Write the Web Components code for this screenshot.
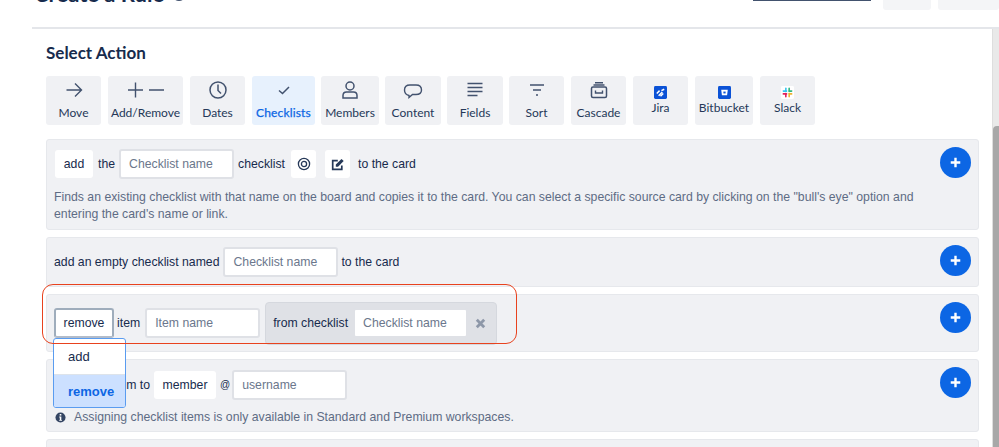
<!DOCTYPE html>
<html><head><meta charset="utf-8"><title>Create a Rule</title>
<style>
html,body{margin:0;padding:0;background:#fff;overflow:hidden;height:447px}
body{font-family:"Liberation Sans",sans-serif;color:#172b4d}
</style></head><body>
<rule-page>
  <rule-header slot="header"></rule-header>
  <section-title>Select Action</section-title>
  <tab-bar>
    <action-tab label="Move" w="55"><svg viewBox="0 0 20 20" width="20" height="20"><path d="M2.5 10H17.5M11 3.5L17.5 10L11 16.5" fill="none" stroke="#42526e" stroke-width="1.4"/></svg></action-tab>
    <action-tab label="Add/Remove" w="75"><svg viewBox="0 0 38 20" width="38" height="20"><path d="M1 10H16M8.5 2.5V17.5M22 10H37" fill="none" stroke="#42526e" stroke-width="1.4"/></svg></action-tab>
    <action-tab label="Dates" w="55"><svg viewBox="0 0 20 20" width="20" height="20"><circle cx="10" cy="10" r="8" fill="none" stroke="#42526e" stroke-width="1.5"/><path d="M10 4.5V10.5L13 13.5" fill="none" stroke="#42526e" stroke-width="1.5"/></svg></action-tab>
    <action-tab label="Checklists" w="63" active><svg viewBox="0 0 20 20" width="20" height="20"><path d="M5 10.5L8.5 13.5L15 7" fill="none" stroke="#42526e" stroke-width="1.5"/></svg></action-tab>
    <action-tab label="Members" w="58"><svg viewBox="0 0 20 20" width="20" height="20"><circle cx="10" cy="6" r="4" fill="none" stroke="#42526e" stroke-width="1.5"/><path d="M3 18V15.5Q3 12 6.5 12H13.5Q17 12 17 15.5V18Z" fill="none" stroke="#42526e" stroke-width="1.5"/></svg></action-tab>
    <action-tab label="Content" w="56"><svg viewBox="0 0 20 20" width="20" height="20"><path d="M6 15.5Q1.5 14.5 1.5 10Q1.5 5 7 5H13Q18.5 5 18.5 10Q18.5 14.5 13 14.5H9.5L6 17.5Z" fill="none" stroke="#42526e" stroke-width="1.4"/></svg></action-tab>
    <action-tab label="Fields" w="56"><svg viewBox="0 0 20 20" width="20" height="20"><path d="M2.5 3.5H17.5M2.5 7.5H17.5M2.5 11.5H17.5M2.5 15.5H12.5" fill="none" stroke="#42526e" stroke-width="1.5"/></svg></action-tab>
    <action-tab label="Sort" w="55"><svg viewBox="0 0 20 20" width="20" height="20"><path d="M3 5H17M6 10H14M9 15H11" fill="none" stroke="#42526e" stroke-width="1.5"/></svg></action-tab>
    <action-tab label="Cascade" w="55"><svg viewBox="0 0 20 20" width="20" height="20"><rect x="2.5" y="7" width="15" height="10.5" rx="1.5" fill="none" stroke="#42526e" stroke-width="1.5"/><path d="M6.5 10.5V13H13.5V10.5M4.5 5H15.5M6 2.8H14" fill="none" stroke="#42526e" stroke-width="1.4"/></svg></action-tab>
    <action-tab label="Jira" w="55" app><svg viewBox="0 0 14 14" width="13" height="13"><rect width="14" height="14" rx="1.5" fill="#0b52d6"/><path d="M3 8L6 5M5 10.5L9 6.5M8 5L11 3.5M7 11L10 8" stroke="#fff" stroke-width="1.6" fill="none"/></svg></action-tab>
    <action-tab label="Bitbucket" w="58" app><svg viewBox="0 0 14 14" width="13" height="13"><rect width="14" height="14" rx="1.5" fill="#0b52d6"/><path d="M3.5 4H10.5L9.8 10H4.2Z" fill="#fff"/><rect x="5.8" y="6" width="2.4" height="2" fill="#0b52d6"/></svg></action-tab>
    <action-tab label="Slack" w="55" app><svg viewBox="0 0 14 14" width="13" height="13"><rect width="14" height="14" rx="1.5" fill="#fff"/><path d="M5.2 2.5V6" stroke="#36c5f0" stroke-width="1.7" stroke-linecap="round"/><path d="M2.5 5.5H6" stroke="#36c5f0" stroke-width="1.7" stroke-linecap="round"/><path d="M8.8 2.5V6M8.5 5.5H11.5" stroke="#2eb67d" stroke-width="1.7" stroke-linecap="round"/><path d="M8.8 8V11.5M8.5 8.5H11.5" stroke="#ecb22e" stroke-width="1.7" stroke-linecap="round"/><path d="M5.2 8V11.5M2.5 8.5H6" stroke="#e01e5a" stroke-width="1.7" stroke-linecap="round"/></svg></action-tab>
  </tab-bar>
  <rule-list>
    <rule-row h="91">
      <rule-line>
        <value-chip w="38" style="margin-left:1px">add</value-chip><span style="margin-left:5px">the</span><text-field w="115" style="margin-left:4px">Checklist name</text-field><span style="margin-left:4px">checklist</span>
        <value-chip w="25" style="margin-left:6px"><svg viewBox="0 0 14 14" width="14" height="14"><circle cx="7" cy="7" r="5.6" fill="none" stroke="#253858" stroke-width="1.3"/><circle cx="7" cy="7" r="2.6" fill="none" stroke="#253858" stroke-width="1.3"/></svg></value-chip>
        <value-chip w="25" style="margin-left:9px"><svg viewBox="0 0 14 14" width="14" height="14"><path d="M10.8 8.5V12.3H1.7V3.6H6.8" fill="none" stroke="#253858" stroke-width="1.7"/><path d="M4.8 7.6L10.5 1.9L12.7 4.1L7 9.8H4.8Z" fill="#253858"/></svg></value-chip>
        <span style="margin-left:8px">to the card</span>
      </rule-line>
      <rule-note>Finds an existing checklist with that name on the board and copies it to the card. You can select a specific source card by clicking on the "bull's eye" option and entering the card's name or link.</rule-note>
    </rule-row>
    <rule-row h="50">
      <rule-line>
        <span>add an empty checklist named</span><text-field w="115" style="margin-left:4px">Checklist name</text-field><span style="margin-left:3px">to the card</span>
      </rule-line>
    </rule-row>
    <rule-row h="58" first="12">
      <rule-line>
        <value-chip w="60" open>remove</value-chip><span style="margin-left:3px">item</span><text-field w="115" style="margin-left:5px">Item name</text-field>
        <optional-group style="margin-left:5px"><span>from checklist</span><text-field w="115" style="margin-left:5px">Checklist name</text-field><remove-x></remove-x></optional-group>
      </rule-line>
    </rule-row>
    <rule-row h="73" first="9">
      <rule-line>
        <span>assign the item to</span><value-chip w="62" style="margin-left:4px">member</value-chip><span style="margin-left:4px;font-size:10px">@</span><text-field w="115" style="margin-left:2px">username</text-field>
      </rule-line>
      <rule-note info><svg viewBox="0 0 12 12" width="11" height="11" style="margin:0 8px 0 1px;flex:none"><circle cx="6" cy="6" r="5.5" fill="#344563"/><rect x="5.1" y="2.2" width="1.8" height="1.7" fill="#fff"/><path d="M4.6 5H6.9V8.6H7.6V9.6H4.6V8.6H5.2V6H4.6Z" fill="#fff"/></svg>Assigning checklist items is only available in Standard and Premium workspaces.</rule-note>
    </rule-row>
    <rule-row h="40"></rule-row>
  </rule-list>
  <select-menu></select-menu>
  <red-outline></red-outline>
  <page-scrollbar></page-scrollbar>
</rule-page>
<script>
function def(name,css,html,init){
  customElements.define(name,class extends HTMLElement{
    connectedCallback(){
      if(this.shadowRoot)return;
      const r=this.attachShadow({mode:"open"});
      r.innerHTML="<style>"+css+"</style>"+(typeof html==="function"?html(this):html);
      if(init)init(this,r);
    }
  });
}
def("rule-page",`:host{display:block;position:relative;width:999px;height:447px;overflow:hidden}
.main{padding:0 0 0 46px}`,`<slot name="header"></slot><div class="main"><slot></slot></div>`);
def("rule-header",`:host{display:block;margin-left:32px;height:27px;border-bottom:2px solid #e4e6ea;width:967px}
.row{display:flex;align-items:flex-start;height:27px}
h1{margin:-18px 0 0 2px;font:700 22px/24px Lato,sans-serif;color:#172b4d;display:flex;align-items:center;gap:8px;white-space:nowrap;flex:none}
i{display:block;width:14px;height:14px;border-radius:50%;background:#42526e}
.link{width:118px;height:1px;background:#42526e;flex:none}
.b{height:10px;background:#f4f5f7;border-radius:0 0 3px 3px;flex:none}`,
`<div class="row"><h1>Create a Rule<i></i></h1><div class="link" id="l"></div><div class="b" style="margin-left:12px;width:48px"></div><div class="b" style="margin-left:7px;width:61px"></div></div>`,
(el,r)=>{const h=r.querySelector("h1"),l=r.querySelector("#l");l.style.marginLeft=(721-h.offsetWidth-2)+"px";});
def("section-title",`:host{display:block;font:700 17px/20px Lato,sans-serif;color:#172b4d;padding-top:14px;height:33px}`,`<slot></slot>`);
def("tab-bar",`:host{display:flex;gap:7px;height:49px}
::slotted(action-tab:nth-child(4)){margin-right:-1px}::slotted(action-tab:nth-child(5)){margin-right:-1px}::slotted(action-tab:nth-child(6)){margin-right:-1px}::slotted(action-tab:nth-child(7)){margin-right:-1px}`,`<slot></slot>`);
def("action-tab",`:host{display:flex;flex-direction:column;align-items:center;box-sizing:border-box;height:49px;border-radius:3px;background:#f0f1f4;color:#253858;font:400 12px/16px Lato,sans-serif;padding-top:4px;white-space:nowrap;flex:none}
:host([active]){background:#e7f1fd;color:#0c66e4;-webkit-text-stroke:.25px #0c66e4;letter-spacing:.15px}
.i{height:20px;display:flex;align-items:center;justify-content:center}
.t{margin-top:5px}
:host([app]){padding-top:10px}
:host([app]) .i{height:13px}
:host([app]) .t{margin-top:1px}`,
el=>`<div class="i"><slot></slot></div><div class="t">${el.getAttribute("label")}</div>`,
el=>{el.style.width=el.getAttribute("w")+"px";});
def("rule-list",`:host{display:flex;flex-direction:column;gap:7px;margin-top:14px;width:933px}`,`<slot></slot>`);
def("rule-row",`:host{display:block;position:relative;box-sizing:border-box;background:#f0f1f4;border:1px solid #e6e8ec;border-radius:3px;padding:8px 7px;font:400 12.25px/16px "Liberation Sans",sans-serif;color:#172b4d}
add-button{position:absolute;right:7px;top:7px}`,
`<slot></slot><add-button></add-button>`,
el=>{el.style.height=el.getAttribute("h")+"px";
 const f=el.getAttribute("first"); if(f)el.style.paddingTop=f+"px";});
def("rule-line",`:host{display:flex;align-items:center;height:32px;white-space:nowrap}`,`<slot></slot>`);
def("rule-note",`:host{display:block;margin-top:9px;color:#5e6c84;font:400 12.25px/17px "Liberation Sans",sans-serif;width:880px}
:host([info]){display:flex;align-items:center;margin-top:8px}`,`<slot></slot>`);
def("value-chip",`:host{display:flex;align-items:center;justify-content:center;box-sizing:border-box;height:28px;background:#fff;border-radius:3px;color:#172b4d;flex:none}
:host([open]){border:2px solid #9fadbc;border-bottom-color:#b3bcc9;height:30px}`,`<slot></slot>`,
el=>{el.style.width=el.getAttribute("w")+"px";});
def("text-field",`:host{display:flex;align-items:center;box-sizing:border-box;height:30px;background:#fff;border:2px solid #dfe1e6;border-radius:3px;color:#6b778c;padding-left:8px;flex:none}`,`<slot></slot>`,
el=>{el.style.width=el.getAttribute("w")+"px";});
def("optional-group",`:host{display:flex;align-items:center;box-sizing:border-box;height:43px;background:#dfe1e6;border:1px solid #d5d8de;border-radius:4px;padding:0 7px;width:232px;flex:none}`,`<slot></slot>`);
def("remove-x",`:host{display:block;margin-left:7px;width:11px;height:11px;line-height:0}`,`<svg viewBox="0 0 11 11" width="11" height="11"><path d="M1.8 1.8L9.2 9.2M9.2 1.8L1.8 9.2" stroke="#8d97a8" stroke-width="2.8"/></svg>`);
def("add-button",`:host{display:flex;align-items:center;justify-content:center;width:31px;height:31px;border-radius:50%;background:#0c66e4}`,`<svg viewBox="0 0 12 12" width="11" height="11"><path d="M6 .8V11.2M.8 6H11.2" stroke="#fff" stroke-width="2.6"/></svg>`);
def("select-menu",`:host{position:absolute;left:53px;top:338px;width:73px;height:70px;box-sizing:border-box;border:1px solid #5a9cf0;border-radius:3px;background:#fff;color:#172b4d;overflow:hidden}
.o{height:35px;padding-left:14px;display:flex;align-items:center;font:400 13px/16px "Liberation Sans",sans-serif}
.s{height:34px;background:#cce0ff;color:#0c66e4;font-weight:700;border-top:1px solid #dde3ea;box-sizing:border-box}`,
`<div class="o">add</div><div class="o s">remove</div>`);
def("red-outline",`:host{position:absolute;left:42px;top:284px;width:475px;height:60px;box-sizing:border-box;border:1.5px solid #e8421e;border-radius:11px;pointer-events:none}`,``);
def("page-scrollbar",`:host{position:absolute;right:0;top:29px;bottom:0;width:7px;background:#e9e9e9;border-left:1px solid #dedede;box-sizing:border-box}
div{position:absolute;left:0;right:0;top:97px;bottom:0;background:#a8a8a8;border-radius:4px 0 0 0}`,`<div></div>`);
</script>
</body></html>
